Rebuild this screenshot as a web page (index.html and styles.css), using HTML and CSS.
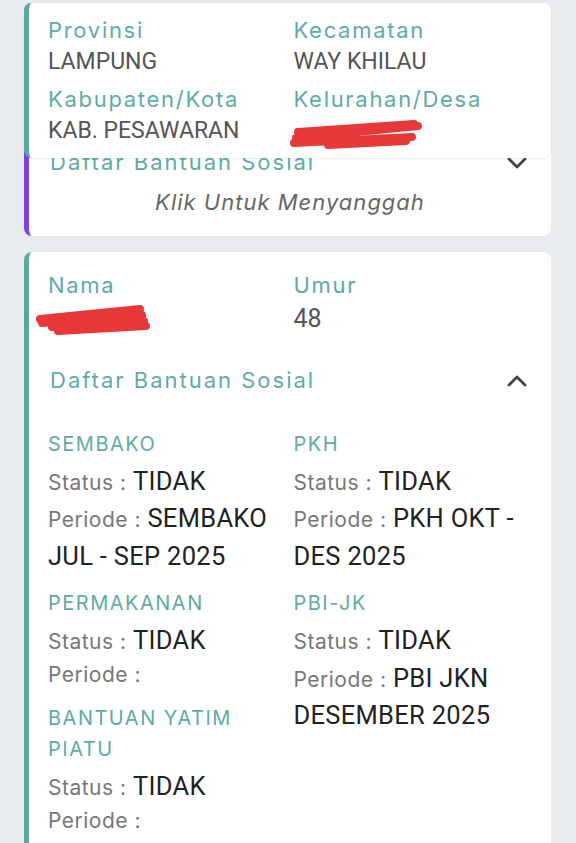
FILE: index.html
```html
<!DOCTYPE html>
<html lang="id">

<head>
  <meta charset="UTF-8">
  <meta name="viewport" content="width=device-width, initial-scale=1.0">
  <title>Cek Bansos</title>
  <link rel="stylesheet" href="styles.css">
</head>

<body>
  <main class="list">

    <section class="card card-dispute">
      <div class="region">
        <div class="field">
          <div class="label">Provinsi</div>
          <div class="value">LAMPUNG</div>
        </div>
        <div class="field">
          <div class="label">Kecamatan</div>
          <div class="value">WAY KHILAU</div>
        </div>
        <div class="field">
          <div class="label">Kabupaten/Kota</div>
          <div class="value">KAB. PESAWARAN</div>
        </div>
        <div class="field">
          <div class="label">Kelurahan/Desa</div>
          <div class="value redacted">
            <svg class="scribble scribble-desa" width="140" height="36" viewBox="0 0 140 36">
              <path d="M8 23 L130 11" />
              <path d="M6 28 L124 22" />
              <path d="M10 17 L126 9" />
              <path d="M40 30 L118 26" />
            </svg>
          </div>
        </div>
      </div>

      <div class="toggle toggle-under">
        <span>Daftar Bantuan Sosial</span>
        <svg class="chevron" width="20" height="12" viewBox="0 0 20 12">
          <polyline points="2,2 10,10 18,2" />
        </svg>
      </div>
      <p class="dispute">Klik Untuk Menyanggah</p>
    </section>

    <section class="card">
      <div class="person">
        <div class="field">
          <div class="label">Nama</div>
          <div class="value value-lg redacted">
            <svg class="scribble scribble-nama" width="124" height="36" viewBox="0 0 124 36">
              <path d="M8 18 L108 8" />
              <path d="M10 22 L110 14" />
              <path d="M26 30 L114 25" />
              <path d="M20 26 L112 20" />
            </svg>
          </div>
        </div>
        <div class="field">
          <div class="label">Umur</div>
          <div class="value value-lg">48</div>
        </div>
      </div>

      <div class="toggle">
        <span>Daftar Bantuan Sosial</span>
        <svg class="chevron" width="20" height="12" viewBox="0 0 20 12">
          <polyline points="2,10 10,2 18,10" />
        </svg>
      </div>

      <div class="programs">
        <div class="program-col">
          <div class="program">
            <div class="program-name">SEMBAKO</div>
            <div class="line">Status : <b>TIDAK</b></div>
            <div class="line">Periode : <b>SEMBAKO JUL - SEP 2025</b></div>
          </div>
          <div class="program">
            <div class="program-name">PERMAKANAN</div>
            <div class="line">Status : <b>TIDAK</b></div>
            <div class="line">Periode :</div>
          </div>
          <div class="program">
            <div class="program-name">BANTUAN YATIM PIATU</div>
            <div class="line">Status : <b>TIDAK</b></div>
            <div class="line">Periode :</div>
          </div>
        </div>
        <div class="program-col">
          <div class="program">
            <div class="program-name">PKH</div>
            <div class="line">Status : <b>TIDAK</b></div>
            <div class="line">Periode : <b>PKH OKT - DES 2025</b></div>
          </div>
          <div class="program">
            <div class="program-name">PBI-JK</div>
            <div class="line">Status : <b>TIDAK</b></div>
            <div class="line">Periode : <b>PBI JKN DESEMBER 2025</b></div>
          </div>
        </div>
      </div>
    </section>

  </main>
</body>

</html>
```

FILE: styles.css
```css
body {
  margin: 0;
  background-color: #e9ecef;
  font-family: Inter, "Open Sans", sans-serif;
  font-size: 22px;
  line-height: 31px;
  color: #555;
}

.list {
  display: flex;
  flex-direction: column;
  gap: 16px;
  padding: 3px 25px 0 24px;
}

.card {
  background: #fff;
  border-left: 5px solid #5ba89f;
  border-radius: 8px;
  padding: 18px 24px 20px 19px;
}

.card-dispute {
  border-left-color: #7b42e3;
  padding: 0 24px 18px 0;
}

/* the location box sits on top of the dispute card */
.region {
  position: relative;
  z-index: 1;
  display: grid;
  grid-template-columns: 1fr 1fr;
  column-gap: 12px;
  row-gap: 7px;
  margin-left: -5px;
  margin-right: -24px;
  padding: 12px 24px 12px 19px;
  background: #fff;
  border-left: 5px solid #5ba89f;
  border-radius: 8px;
  box-shadow: 0 1px 2px rgba(0, 0, 0, 0.08);
}

.person {
  display: grid;
  grid-template-columns: 1fr 1fr;
  column-gap: 12px;
}

.label {
  color: #5eaca3;
  letter-spacing: 1.7px;
}

.value {
  font-family: Roboto, "Liberation Sans", sans-serif;
  font-size: 23px;
  color: #555;
}

.value-lg {
  font-size: 25px;
  line-height: 35px;
}

.redacted {
  position: relative;
  min-height: 31px;
}

.scribble {
  position: absolute;
  fill: none;
  stroke: #e8383a;
  stroke-linecap: round;
  stroke-width: 8;
}

.scribble-desa {
  left: -6px;
  top: 0;
}

.scribble-nama {
  left: -16px;
  top: 0;
}

.toggle {
  display: flex;
  justify-content: space-between;
  align-items: center;
  margin-top: 29px;
  padding-left: 2px;
  color: #5eaca3;
  letter-spacing: 2px;
}

.toggle-under {
  margin-top: -11px;
  padding-left: 21px;
}

.chevron {
  fill: none;
  stroke: #444;
  stroke-width: 2.8;
  stroke-linecap: round;
  stroke-linejoin: round;
}

.dispute {
  margin: 9px 0 0 24px;
  text-align: center;
  font-style: italic;
  color: #666;
  letter-spacing: 1px;
}

.programs {
  display: grid;
  grid-template-columns: 1fr 1fr;
  column-gap: 12px;
  margin-top: 33px;
}

.program-col {
  display: flex;
  flex-direction: column;
  gap: 13px;
}

.program-name {
  margin-bottom: 3px;
  color: #5eaca3;
  font-size: 20px;
  line-height: 31px;
  letter-spacing: 1.5px;
}

.line {
  color: #777;
  font-size: 21px;
  line-height: 1.45;
  letter-spacing: 0.5px;
}

.line b {
  font-family: Roboto, "Liberation Sans", sans-serif;
  font-weight: 400;
  font-size: 25.5px;
  line-height: 1.47;
  letter-spacing: 0.3px;
  color: #222;
}
```
